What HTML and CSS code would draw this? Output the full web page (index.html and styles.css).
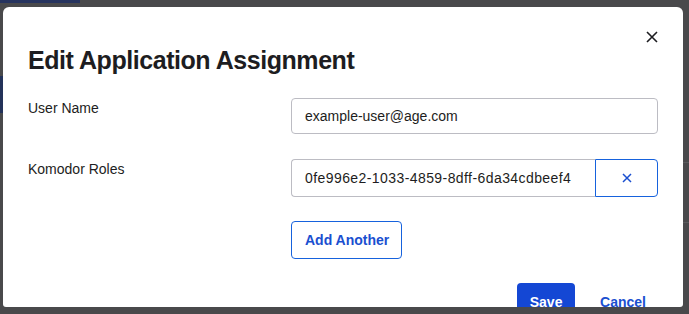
FILE: index.html
```html
<!DOCTYPE html>
<html>
<head>
<meta charset="utf-8">
<link rel="stylesheet" href="styles.css">
</head>
<body>
<div class="topbar"></div>
<div class="stage">
  <div class="gutter-left"><div class="bg-block"></div></div>
  <div class="modal">
    <div class="modal-header">
      <h1 class="title">Edit Application Assignment</h1>
      <button class="close" aria-label="Close">
        <svg width="12" height="12" viewBox="0 0 12 12"><path d="M1 1L11 11M11 1L1 11" stroke="#1d1d21" stroke-width="1.6" fill="none"/></svg>
      </button>
    </div>
    <div class="row">
      <div class="label">User Name</div>
      <div class="field">
        <div class="input">example-user@age.com</div>
      </div>
    </div>
    <div class="row">
      <div class="label">Komodor Roles</div>
      <div class="field">
        <div class="combo">
          <div class="input input-joined guid">0fe996e2-1033-4859-8dff-6da34cdbeef4</div>
          <button class="remove" aria-label="Remove">
            <svg width="10" height="10" viewBox="0 0 10 10"><path d="M1 1L9 9M9 1L1 9" stroke="#1a4fd0" stroke-width="1.5" fill="none"/></svg>
          </button>
        </div>
        <button class="btn-secondary">Add Another</button>
      </div>
    </div>
    <div class="footer">
      <button class="btn-primary">Save</button>
      <button class="btn-link">Cancel</button>
    </div>
  </div>
  <div class="gutter-right">
    <div class="bg-line first"></div>
    <div class="bg-line second"></div>
  </div>
</div>
</body>
</html>
```

FILE: styles.css
```css
* { box-sizing: border-box; }
html, body { margin: 0; padding: 0; }
body {
  width: 689px;
  height: 314px;
  overflow: hidden;
  background: #49494b;
  font-family: "Liberation Sans", Arial, sans-serif;
  color: #1d1d21;
}
.topbar {
  width: 80px;
  height: 3px;
  background: #26335e;
}
.stage {
  display: flex;
  margin-top: 4px;
  align-items: flex-start;
}
.gutter-left { width: 3px; flex: none; }
.bg-block {
  margin-top: 69px;
  height: 37px;
  background: #233259;
}
.gutter-right { width: 6px; flex: none; }
.bg-line { height: 1px; background: #5a5a5d; }
.bg-line.first { margin-top: 155px; }
.bg-line.second { margin-top: 59px; }
.modal {
  width: 680px;
  height: 300px;
  flex: none;
  background: #fff;
  border-radius: 6px 6px 3px 3px;
  padding: 18px 25px 0 25px;
  overflow: hidden;
}
.modal-header {
  display: flex;
  justify-content: space-between;
  align-items: flex-start;
}
.title {
  margin: 21px 0 24px 0;
  font-size: 25px;
  line-height: 28px;
  letter-spacing: -0.45px;
  font-weight: 700;
  color: #1d1d21;
}
.close {
  width: 24px;
  height: 24px;
  margin-right: -6px;
  padding: 0;
  border: 0;
  background: none;
  display: flex;
  align-items: center;
  justify-content: center;
}
.row {
  display: grid;
  grid-template-columns: 263px 367px;
  margin-bottom: 25px;
}
.label {
  font-size: 14px;
  line-height: 20px;
  color: #1d1d21;
}
.field {
  display: flex;
  flex-direction: column;
  gap: 24px;
  align-items: flex-start;
}
.input {
  width: 100%;
  height: 36px;
  border: 1px solid #bcbcc3;
  border-radius: 4px;
  padding: 0 13px;
  display: flex;
  align-items: center;
  font-size: 14px;
  color: #1d1d21;
  white-space: nowrap;
  overflow: hidden;
}
.guid { letter-spacing: 0.42px; }
.combo {
  display: flex;
  width: 100%;
}
.input-joined {
  flex: 1;
  height: 38px;
  border-radius: 4px 0 0 4px;
  border-right: 0;
}
.remove {
  width: 63px;
  height: 38px;
  flex: none;
  border: 1px solid #1662dd;
  border-radius: 0 4px 4px 0;
  background: #fff;
  display: flex;
  align-items: center;
  justify-content: center;
  padding: 0;
}
.btn-secondary {
  height: 38px;
  padding: 0 12px 0 13px;
  border: 1px solid #1662dd;
  border-radius: 4px;
  background: #fff;
  font-family: "Liberation Sans", Arial, sans-serif;
  font-weight: 700;
  font-size: 14px;
  color: #1a4fd0;
}
.footer {
  display: flex;
  justify-content: flex-end;
  margin-top: -1px;
  gap: 13px;
}
.btn-primary {
  height: 38px;
  width: 58px;
  padding: 0;
  border: 0;
  border-radius: 4px;
  background: #1447d4;
  color: #fff;
  font-family: "Liberation Sans", Arial, sans-serif;
  font-weight: 700;
  font-size: 14px;
}
.btn-link {
  height: 38px;
  padding: 0 12px;
  border: 0;
  background: none;
  color: #1a4fd0;
  font-family: "Liberation Sans", Arial, sans-serif;
  font-weight: 700;
  font-size: 14px;
}
```
